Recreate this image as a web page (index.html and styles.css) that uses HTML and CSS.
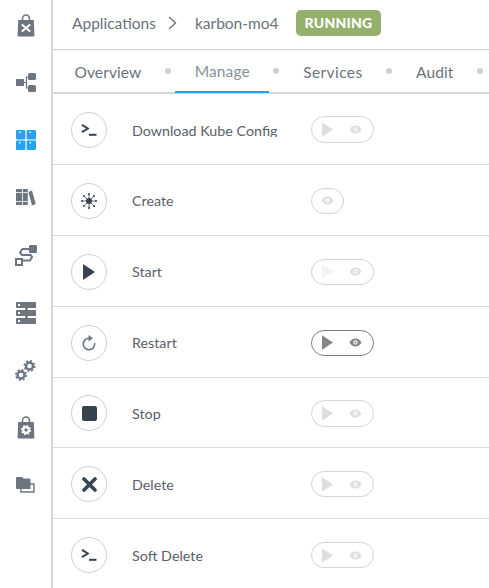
FILE: index.html
```html
<!DOCTYPE html>
<html lang="en">
<head>
    <meta charset="UTF-8" />
    <meta name="viewport" content="width=device-width, initial-scale=1" />
    <title>karbon-mo4 - Manage</title>
    <link rel="stylesheet" href="styles.css">
</head>
<body>

<svg class="defs" aria-hidden="true">
    <symbol id="run" viewBox="0 0 12 16"><path d="M0 0 L12 8 L0 16 Z" fill="currentColor"/></symbol>
    <symbol id="eye" viewBox="0 0 14 10"><path fill-rule="evenodd" d="M7 .5C10.2.5 12.6 2.800 13.600 5 12.600 7.200 10.200 9.500 7 9.500S1.400 7.200.4 5C1.400 2.800 3.800.5 7 .5ZM7 2.600A2.400 2.400 0 1 0 7 7.400 2.400 2.400 0 1 0 7 2.600ZM7 3.800A1.200 1.200 0 1 1 7 6.200 1.200 1.200 0 1 1 7 3.800Z" fill="currentColor"/></symbol>
    <symbol id="term" viewBox="0 0 16 12"><path d="M1 .8 L6.800 4.500 L1 8.200" fill="none" stroke="currentColor" stroke-width="2"/><path d="M8 10.800H15.500" stroke="currentColor" stroke-width="2"/></symbol>
</svg>

<aside class="sidebar">
    <a class="side-item">
        <svg width="18" height="23" viewBox="0 0 18 23"><path d="M5.500 6V4.500a3.500 3.500 0 0 1 7 0V6" fill="none" stroke="#6d7680" stroke-width="1.600"/><path d="M1.200 6H16.800L17.400 21.500Q17.400 22.500 16.400 22.500H1.600Q.6 22.500.6 21.500Z" fill="#6d7680"/><path d="M4.800 10.500 13.200 17.500M13.200 10.500 4.800 17.500" stroke="#fff" stroke-width="2"/></svg>
    </a>
    <a class="side-item">
        <svg width="20" height="19" viewBox="0 0 20 19"><path d="M8 9.500H10.500M13 4H10.500V15H13" fill="none" stroke="#6d7680" stroke-width="1.200"/><rect x="0" y="6" width="8" height="7" rx=".5" fill="#6d7680"/><rect x="12" y="0" width="8" height="7" rx="1.500" fill="#6d7680"/><rect x="12" y="12" width="8" height="7" rx="1.500" fill="#6d7680"/></svg>
    </a>
    <a class="side-item active">
        <svg width="20" height="20" viewBox="0 0 20 20" fill="#25a3f2"><rect width="9.400" height="9.400" rx="1"/><rect x="10.600" width="9.400" height="9.400" rx="1"/><rect y="10.600" width="9.400" height="9.400" rx="1"/><rect x="10.600" y="10.600" width="9.400" height="9.400" rx="1"/><g fill="#fff"><rect x="3" y="1.500" width="1.500" height="1.500"/><rect x="13.500" y="1.500" width="1.500" height="1.500"/><rect x="3" y="12" width="1.500" height="1.500"/><rect x="13.500" y="12" width="1.500" height="1.500"/></g></svg>
    </a>
    <a class="side-item">
        <svg width="20" height="17" viewBox="0 0 20 17" fill="#6d7680"><rect x="0" y="0" width="6" height="16" rx=".5"/><rect x="6.800" y="0" width="5" height="16" rx=".5"/><path d="M12.500 3 16 1.500 19.800 15 16 16.500Z"/><path d="M0 3.500H11.800M0 12.500H11.800" stroke="#fff" stroke-width=".8"/></svg>
    </a>
    <a class="side-item">
        <svg width="22" height="21" viewBox="0 0 22 21"><rect x="14" y="0" width="8" height="8" rx="1" fill="#6d7680"/><path d="M14 4H7.500L5 7.500 7 10H15.500L17 12 15 15.500H8" fill="none" stroke="#6d7680" stroke-width="2"/><rect x="1" y="14" width="6" height="6" fill="#fff" stroke="#6d7680" stroke-width="2"/></svg>
    </a>
    <a class="side-item">
        <svg width="20" height="22" viewBox="0 0 20 22"><g fill="#6d7680"><rect y="0" width="20" height="6" rx="1"/><rect y="8" width="20" height="6" rx="1"/><rect y="16" width="20" height="6" rx="1"/></g><g fill="#fff"><rect x="2" y="2" width="2" height="2"/><rect x="2" y="10" width="2" height="2"/><rect x="2" y="18" width="2" height="2"/></g><path d="M10.500 0V22" stroke="#6d7680" stroke-width="2.500"/></svg>
    </a>
    <a class="side-item">
        <svg width="21" height="21" viewBox="0 0 21 21" fill="none" stroke="#6d7680"><circle cx="14.500" cy="6" r="3.500" stroke-width="2.400"/><circle cx="14.500" cy="6" r="5.200" stroke-width="1.600" stroke-dasharray="2 2.080"/><circle cx="6" cy="15" r="3.500" stroke-width="2.400"/><circle cx="6" cy="15" r="5.200" stroke-width="1.600" stroke-dasharray="2 2.080"/></svg>
    </a>
    <a class="side-item">
        <svg width="18" height="23" viewBox="0 0 18 23"><path d="M5.500 6V4.500a3.500 3.500 0 0 1 7 0V6" fill="none" stroke="#6d7680" stroke-width="1.600"/><path d="M1.200 6H16.800L17.400 21.500Q17.400 22.500 16.400 22.500H1.600Q.6 22.500.6 21.500Z" fill="#6d7680"/><circle cx="9" cy="14" r="2.800" fill="none" stroke="#fff" stroke-width="2.200"/><circle cx="9" cy="14" r="4.400" fill="none" stroke="#fff" stroke-width="1.400" stroke-dasharray="1.700 1.750"/></svg>
    </a>
    <a class="side-item">
        <svg width="19" height="16" viewBox="0 0 19 16"><path d="M5 7H18V15H5Z" fill="#fff" stroke="#6d7680" stroke-width="1.400"/><path d="M0 1Q0 0 1 0H6L7.500 1.500H13.500Q14.500 1.500 14.500 2.500V12H1Q0 12 0 11Z" fill="#6d7680"/></svg>
    </a>
</aside>

<main class="main">
    <header class="crumbs">
        <span class="crumb">Applications</span>
        <svg class="crumb-sep" width="9" height="14" viewBox="0 0 9 14"><path d="M1 1 L7.500 7 L1 13" fill="none" stroke="#6d7680" stroke-width="1.400"/></svg>
        <span class="crumb">karbon-mo4</span>
        <span class="badge">RUNNING</span>
    </header>

    <nav class="tabs">
        <a class="tab">Overview</a>
        <i class="dot"></i>
        <a class="tab active">Manage</a>
        <i class="dot"></i>
        <a class="tab wide">Services</a>
        <i class="dot"></i>
        <a class="tab">Audit</a>
        <i class="dot"></i>
    </nav>

    <section class="rows">
        <div class="row">
            <span class="circle"><svg width="16" height="12"><use href="#term"/></svg></span>
            <span class="label clip">Download Kube Config</span>
            <span class="pill tall faint"><svg class="pill-run" width="11" height="15"><use href="#run"/></svg><svg class="pill-eye" width="13" height="9"><use href="#eye"/></svg></span>
        </div>
        <div class="row">
            <span class="circle">
                <svg width="16" height="16" viewBox="0 0 16 16" stroke="#37434f"><path d="M8 .8V15.200M.8 8H15.200M2.900 2.900 13.100 13.100M13.100 2.900 2.900 13.100" stroke-width=".8"/><circle cx="8" cy="8" r="3" fill="#37434f" stroke="none"/><g fill="#37434f" stroke="none"><circle cx="8" cy="1" r="1"/><circle cx="8" cy="15" r="1"/><circle cx="1" cy="8" r="1"/><circle cx="15" cy="8" r="1"/><circle cx="3" cy="3" r="1"/><circle cx="13" cy="3" r="1"/><circle cx="3" cy="13" r="1"/><circle cx="13" cy="13" r="1"/></g></svg>
            </span>
            <span class="label">Create</span>
            <span class="pill faint short"><svg class="pill-eye" width="13" height="9"><use href="#eye"/></svg></span>
        </div>
        <div class="row">
            <span class="circle"><svg width="12" height="16"><use href="#run"/></svg></span>
            <span class="label">Start</span>
            <span class="pill faint lighter"><svg class="pill-run" width="11" height="15"><use href="#run"/></svg><svg class="pill-eye" width="13" height="9"><use href="#eye"/></svg></span>
        </div>
        <div class="row">
            <span class="circle soft">
                <svg width="14" height="16" viewBox="0 0 14 16"><path d="M7 3.300A5.700 5.700 0 1 0 12.600 8" fill="none" stroke="currentColor" stroke-width="1.600"/><path d="M6.500 0 11 3.300 6.500 6.600Z" fill="currentColor"/></svg>
            </span>
            <span class="label">Restart</span>
            <span class="pill on"><svg class="pill-run" width="11" height="15"><use href="#run"/></svg><svg class="pill-eye" width="13" height="9"><use href="#eye"/></svg></span>
        </div>
        <div class="row">
            <span class="circle"><span class="stop"></span></span>
            <span class="label">Stop</span>
            <span class="pill tall faint"><svg class="pill-run" width="11" height="15"><use href="#run"/></svg><svg class="pill-eye" width="13" height="9"><use href="#eye"/></svg></span>
        </div>
        <div class="row">
            <span class="circle">
                <svg width="15" height="15" viewBox="0 0 15 15"><path d="M2 2 13 13M13 2 2 13" stroke="currentColor" stroke-width="3.600" stroke-linecap="round"/></svg>
            </span>
            <span class="label">Delete</span>
            <span class="pill faint"><svg class="pill-run" width="11" height="15"><use href="#run"/></svg><svg class="pill-eye" width="13" height="9"><use href="#eye"/></svg></span>
        </div>
        <div class="row">
            <span class="circle"><svg width="16" height="12"><use href="#term"/></svg></span>
            <span class="label">Soft Delete</span>
            <span class="pill faint"><svg class="pill-run" width="11" height="15"><use href="#run"/></svg><svg class="pill-eye" width="13" height="9"><use href="#eye"/></svg></span>
        </div>
    </section>
</main>

</body>
</html>
```

FILE: styles.css
```css
html, body {
    height: 100%;
}
body {
    font-family: Lato, "Open Sans", sans-serif;
    background: white;
    color: #5a6068;
    display: flex;
    margin: 0;
    overflow: hidden;
}
.defs {
    display: none;
}
.sidebar {
    width: 51px;
    flex: none;
    border-right: 2px solid #d6d6d6;
    display: flex;
    flex-direction: column;
    gap: 35.5px;
    padding-top: 14px;
    overflow: hidden;
}
.side-item {
    height: 22px;
    flex: none;
    display: flex;
    justify-content: center;
    align-items: center;
}
.side-item svg {
    display: block;
}
.main {
    flex: 1;
    min-width: 0;
}
.crumbs {
    height: 49px;
    border-bottom: 1px solid #d0d0d0;
    display: flex;
    align-items: center;
    padding-left: 19px;
    font-size: 15.5px;
}
.crumb {
    color: #6a727b;
    margin-bottom: 3px;
}
.crumb-sep {
    margin: 0 18px 3px 12px;
}
.badge {
    margin: 0 0 4px 17px;
    background: #95b06c;
    color: white;
    font-weight: 900;
    font-size: 14px;
    letter-spacing: 0.2px;
    padding: 0 9px;
    height: 26px;
    line-height: 26px;
    border-radius: 5px;
}
.tabs {
    height: 44px;
    box-sizing: border-box;
    border-bottom: 2px solid #d6d6d6;
    display: flex;
    align-items: stretch;
    padding-left: 2px;
    font-size: 15.5px;
    letter-spacing: 0.1px;
    white-space: nowrap;
}
.tab {
    color: #6a727b;
    padding: 0 19.5px;
    display: flex;
    align-items: center;
    height: 43px;
    box-sizing: border-box;
}
.tab.wide {
    letter-spacing: 0.4px;
}
.tab.active {
    color: #87919b;
    border-bottom: 2px solid #25a3f2;
}
.dot {
    width: 14.5px;
    display: flex;
    align-items: center;
    justify-content: center;
}
.dot::after {
    content: "";
    width: 6px;
    height: 6px;
    border-radius: 50%;
    background: #d0d0d0;
}
.row {
    height: 70.88px;
    box-sizing: border-box;
    border-bottom: 1px solid #dcdcdc;
    display: flex;
    align-items: center;
    padding: 2px 0 0 18px;
}
.row:last-child {
    height: 69px;
    padding-top: 3px;
    border-bottom: none;
}
.circle {
    width: 36px;
    height: 36px;
    box-sizing: border-box;
    border: 1px solid #cfcfcf;
    border-radius: 50%;
    display: flex;
    justify-content: center;
    align-items: center;
    color: #37434f;
    flex: none;
}
.circle.soft {
    color: #6d7680;
}
.stop {
    width: 15px;
    height: 15px;
    border-radius: 2px;
    background: #37434f;
}
.label {
    width: 179px;
    flex: none;
    margin: 1px 0 0 25px;
    font-size: 14.3px;
    color: #5a6068;
    height: 18px;
    line-height: 18px;
    overflow: hidden;
    white-space: nowrap;
}
.label.clip {
    height: 15px;
    margin-bottom: 2px;
}
.pill {
    width: 63px;
    height: 26px;
    box-sizing: border-box;
    border: 1px solid #d4d4d4;
    border-radius: 14px;
    display: flex;
    align-items: center;
    padding-left: 10px;
    color: #dedede;
}
.pill.tall {
    height: 27px;
}
.pill.short {
    width: 33px;
    justify-content: center;
    padding-left: 0;
}
.pill.lighter .pill-run {
    color: #f2f2f2;
}
.pill.on {
    border-color: #7f7f7f;
    color: #858585;
}
.pill-eye {
    margin-left: 16px;
}
.pill.short .pill-eye {
    margin-left: 0;
}
```
